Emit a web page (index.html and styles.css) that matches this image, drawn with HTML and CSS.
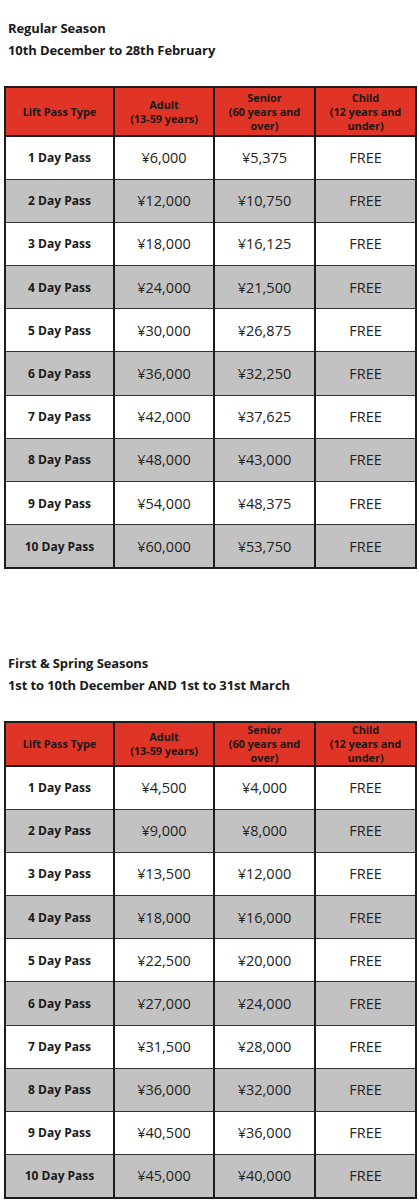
FILE: index.html
```html
<!DOCTYPE html>
<html lang="en">
<head>
<meta charset="utf-8">
<title>Lift Pass Prices</title>
<link rel="stylesheet" href="styles.css">
</head>
<body>
<section class="season season-first">
  <h2 class="season-title">Regular Season<br>10th December to 28th February</h2>
  <table class="prices">
    <colgroup>
      <col class="col-type"><col class="col-adult"><col class="col-senior"><col class="col-child">
    </colgroup>
    <thead>
      <tr class="head head-tall">
        <th>Lift Pass Type</th>
        <th>Adult<br>(13-59 years)</th>
        <th>Senior<br>(60 years and<br>over)</th>
        <th>Child<br>(12 years and<br>under)</th>
      </tr>
    </thead>
    <tbody>
      <tr><th>1 Day Pass</th><td>¥6,000</td><td>¥5,375</td><td>FREE</td></tr>
      <tr class="alt"><th>2 Day Pass</th><td>¥12,000</td><td>¥10,750</td><td>FREE</td></tr>
      <tr><th>3 Day Pass</th><td>¥18,000</td><td>¥16,125</td><td>FREE</td></tr>
      <tr class="alt"><th>4 Day Pass</th><td>¥24,000</td><td>¥21,500</td><td>FREE</td></tr>
      <tr><th>5 Day Pass</th><td>¥30,000</td><td>¥26,875</td><td>FREE</td></tr>
      <tr class="alt"><th>6 Day Pass</th><td>¥36,000</td><td>¥32,250</td><td>FREE</td></tr>
      <tr><th>7 Day Pass</th><td>¥42,000</td><td>¥37,625</td><td>FREE</td></tr>
      <tr class="alt"><th>8 Day Pass</th><td>¥48,000</td><td>¥43,000</td><td>FREE</td></tr>
      <tr><th>9 Day Pass</th><td>¥54,000</td><td>¥48,375</td><td>FREE</td></tr>
      <tr class="alt"><th>10 Day Pass</th><td>¥60,000</td><td>¥53,750</td><td>FREE</td></tr>
    </tbody>
  </table>
</section>
<section class="season season-second">
  <h2 class="season-title">First &amp; Spring Seasons<br>1st to 10th December AND 1st to 31st March</h2>
  <table class="prices">
    <colgroup>
      <col class="col-type"><col class="col-adult"><col class="col-senior"><col class="col-child">
    </colgroup>
    <thead>
      <tr class="head">
        <th>Lift Pass Type</th>
        <th>Adult<br>(13-59 years)</th>
        <th>Senior<br>(60 years and<br>over)</th>
        <th>Child<br>(12 years and<br>under)</th>
      </tr>
    </thead>
    <tbody>
      <tr><th>1 Day Pass</th><td>¥4,500</td><td>¥4,000</td><td>FREE</td></tr>
      <tr class="alt"><th>2 Day Pass</th><td>¥9,000</td><td>¥8,000</td><td>FREE</td></tr>
      <tr><th>3 Day Pass</th><td>¥13,500</td><td>¥12,000</td><td>FREE</td></tr>
      <tr class="alt"><th>4 Day Pass</th><td>¥18,000</td><td>¥16,000</td><td>FREE</td></tr>
      <tr><th>5 Day Pass</th><td>¥22,500</td><td>¥20,000</td><td>FREE</td></tr>
      <tr class="alt"><th>6 Day Pass</th><td>¥27,000</td><td>¥24,000</td><td>FREE</td></tr>
      <tr><th>7 Day Pass</th><td>¥31,500</td><td>¥28,000</td><td>FREE</td></tr>
      <tr class="alt"><th>8 Day Pass</th><td>¥36,000</td><td>¥32,000</td><td>FREE</td></tr>
      <tr><th>9 Day Pass</th><td>¥40,500</td><td>¥36,000</td><td>FREE</td></tr>
      <tr class="alt"><th>10 Day Pass</th><td>¥45,000</td><td>¥40,000</td><td>FREE</td></tr>
    </tbody>
  </table>
</section>
</body>
</html>
```
FILE: styles.css
```css
html, body {
  margin: 0;
  padding: 0;
  background: #fff;
}
body {
  font-family: "Open Sans", "Noto Sans", "DejaVu Sans", sans-serif;
  color: #1a1a1a;
  width: 419px;
}
.season {
  padding: 0 4px;
}
.season-first {
  padding-top: 17px;
}
.season-second {
  padding-top: 83px;
}
.season-title {
  margin: 0 0 25px 4px;
  font-size: 13px;
  font-weight: 700;
  line-height: 22px;
  letter-spacing: -0.1px;
}
.prices {
  border-collapse: collapse;
  width: 411px;
  table-layout: fixed;
  border: 2px solid #1c1c1c;
}
.col-type { width: 109px; }
.col-adult { width: 100px; }
.col-senior { width: 101px; }
.col-child { width: 101px; }
.prices th,
.prices td {
  border-left: 2px solid #1c1c1c;
  border-right: 2px solid #1c1c1c;
  border-top: 1px solid #333;
  border-bottom: 1px solid #333;
  text-align: center;
  vertical-align: middle;
  padding: 0;
}
.head th {
  background: #e03426;
  color: #1a1a1a;
  font-size: 11px;
  font-weight: 700;
  line-height: 14px;
  height: 40px;
  border-bottom: 2px solid #1c1c1c;
  letter-spacing: -0.1px;
}
.head-tall th {
  height: 47px;
}
tbody tr {
  height: 43.2px;
}
tbody th {
  font-size: 12px;
  font-weight: 700;
  background: #fff;
}
tbody td {
  font-size: 14.5px;
  font-weight: 400;
  color: #222;
  background: #fff;
}
tbody tr.alt th,
tbody tr.alt td {
  background: #c2c2c2;
}
```
